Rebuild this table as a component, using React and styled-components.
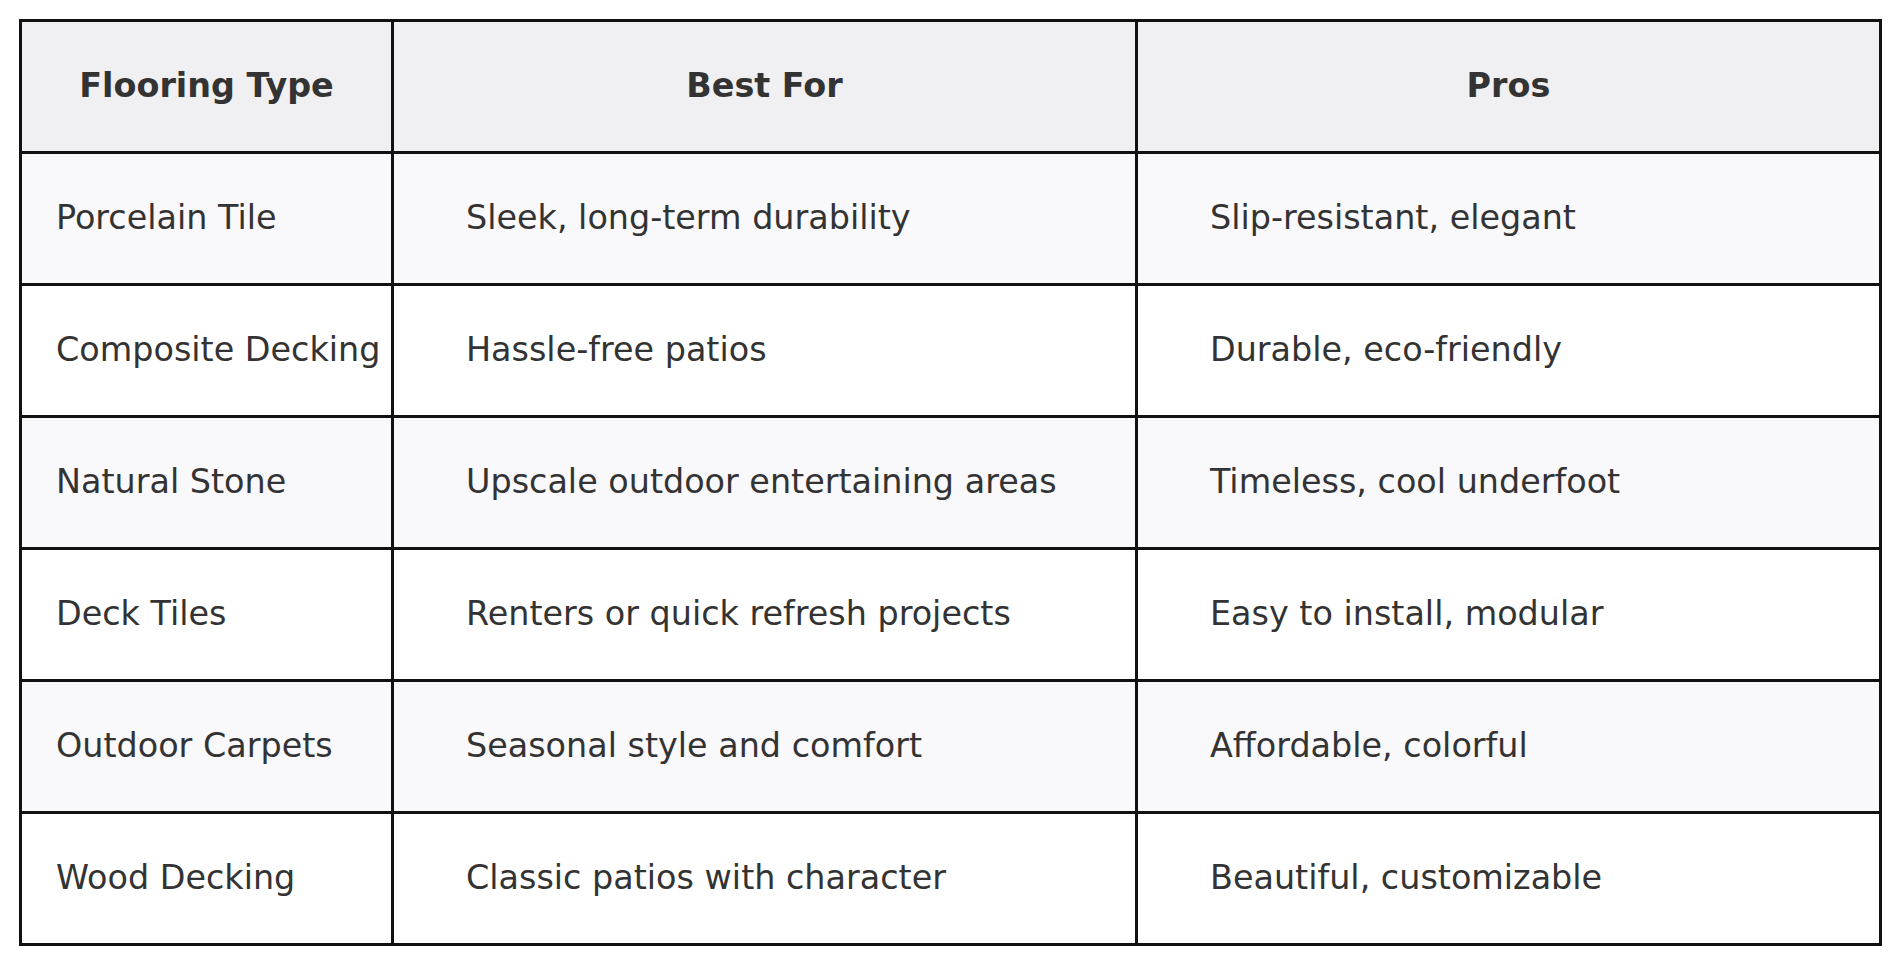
import React from "react";
import styled, { createGlobalStyle } from "styled-components";

const GlobalStyle = createGlobalStyle`
    html, body {
        margin: 0;
        padding: 0;
        background: #ffffff;
    }
    body {
        font-family: "DejaVu Sans", "Liberation Sans", sans-serif;
    }
`;

const Page = styled.div`
    padding: 19px;
`;

const Grid = styled.div`
    display: grid;
    grid-template-columns: 372px 744px 744px;
    grid-auto-rows: 132px;
    width: max-content;
    border-top: 3px solid #111111;
    border-left: 3px solid #111111;
    font-size: 33.4px;
    color: #333333;
`;

const HeadCell = styled.div`
    box-sizing: border-box;
    display: flex;
    align-items: center;
    justify-content: center;
    padding-bottom: 2px;
    background: #f0eff2;
    border-right: 3px solid #111111;
    border-bottom: 3px solid #111111;
    font-weight: bold;
`;

const Cell = styled.div`
    box-sizing: border-box;
    display: flex;
    align-items: center;
    padding: 0 0 2px ${(p) => p.$indent}px;
    background: ${(p) => (p.$shaded ? "#f9f8fb" : "#ffffff")};
    border-right: 3px solid #111111;
    border-bottom: 3px solid #111111;
    white-space: nowrap;
`;

const columns = [
    { title: "Flooring Type", indent: 34 },
    { title: "Best For", indent: 72 },
    { title: "Pros", indent: 72 },
];

const rows = [
    ["Porcelain Tile", "Sleek, long-term durability", "Slip-resistant, elegant"],
    ["Composite Decking", "Hassle-free patios", "Durable, eco-friendly"],
    ["Natural Stone", "Upscale outdoor entertaining areas", "Timeless, cool underfoot"],
    ["Deck Tiles", "Renters or quick refresh projects", "Easy to install, modular"],
    ["Outdoor Carpets", "Seasonal style and comfort", "Affordable, colorful"],
    ["Wood Decking", "Classic patios with character", "Beautiful, customizable"],
];

export default function App() {
    return (
        <Page>
            <GlobalStyle />
            <Grid role="table">
                {columns.map((c) => (
                    <HeadCell key={c.title} role="columnheader">
                        {c.title}
                    </HeadCell>
                ))}
                {rows.map((r, i) =>
                    r.map((text, j) => (
                        <Cell
                            key={r[0] + j}
                            role="cell"
                            $indent={columns[j].indent}
                            $shaded={i % 2 === 0}
                        >
                            {text}
                        </Cell>
                    ))
                )}
            </Grid>
        </Page>
    );
}
